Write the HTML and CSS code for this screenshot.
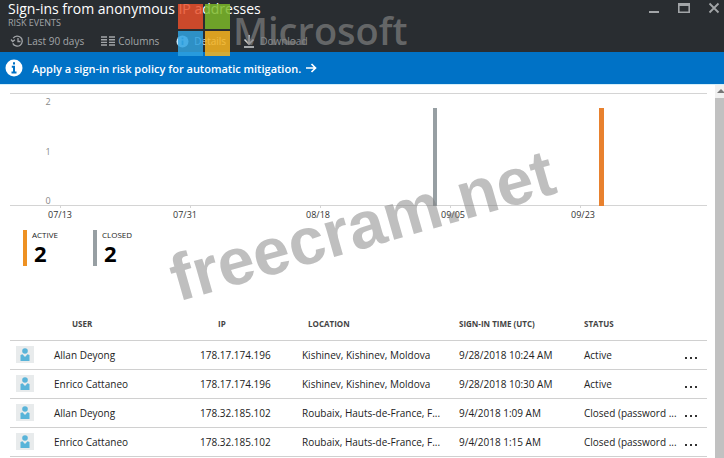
FILE: index.html
```html
<!DOCTYPE html>
<html lang="en">
<head>
  <meta charset="UTF-8">
  <title>Sign-ins from anonymous IP addresses</title>
  <link rel="stylesheet" href="styles.css">
</head>
<body>

<header class="blade-header">
  <div class="title-row">
    <h1>Sign-ins from anonymous IP addresses</h1>
    <div class="window-buttons">
      <button aria-label="Minimize"><svg width="12" height="12" viewBox="0 0 12 12"><path d="M1 10h10" stroke-width="2"/></svg></button>
      <button aria-label="Maximize"><svg width="12" height="12" viewBox="0 0 12 12"><path d="M0 2.500h12M.800 2v8.200h10.400V2" stroke-width="1.600"/><path d="M0 2.500h12" stroke-width="3"/></svg></button>
      <button aria-label="Close"><svg width="12" height="12" viewBox="0 0 12 12"><path d="M1.500 1.500l9 9M10.500 1.500l-9 9" stroke-width="1.800"/></svg></button>
    </div>
  </div>
  <div class="subtitle">RISK EVENTS</div>
  <div class="toolbar">
    <button>
      <svg width="14" height="12" viewBox="0 0 14 12"><path d="M3.200 3.200a5 5 0 1 1-.4 5.200M1 4.500l1.700 2 2.200-1.800M8 3v3.500h2.500" stroke-width="1.300"/></svg>
      Last 90 days
    </button>
    <button>
      <svg width="14" height="10" viewBox="0 0 14 10"><path d="M0 1h6M8 1h6M0 3.700h6M8 3.700h6M0 6.400h6M8 6.400h6M0 9h6M8 9h6" stroke-width="1.400"/></svg>
      Columns
    </button>
    <button class="details">
      <svg width="13" height="13" viewBox="0 0 13 13"><circle class="solid" cx="6.500" cy="6.500" r="6"/><path class="cut" d="M6.500 5.500v4.500M6.500 2.500v1.800" stroke-width="1.800"/></svg>
      Details
    </button>
    <button class="download">
      <svg width="12" height="13" viewBox="0 0 12 13"><path d="M6 0v8.500M1.500 4.500L6 9l4.500-4.500M1 12h10" stroke-width="1.600"/></svg>
      Download
    </button>
  </div>
  <div class="brand">
    <svg width="52" height="52" viewBox="0 0 52 52">
      <path fill="#ea4f2a" d="M0 0h25v25H0z"/>
      <path fill="#7cb928" d="M27 0h25v25H27z"/>
      <path fill="#30a3e2" d="M0 27h25v25H0z"/>
      <path fill="#fbb71f" d="M27 27h25v25H27z"/>
    </svg>
    <span>Microsoft</span>
  </div>
</header>

<a class="banner" href="#">
  <svg width="18" height="18" viewBox="0 0 18 18"><circle cx="9" cy="9" r="8.500" fill="#fff"/><path d="M9 3.200v2.400M6.800 7.700H9v5.500M6.500 13.500h5" stroke="#0072c6" stroke-width="2" fill="none"/></svg>
  <span>Apply a sign-in risk policy for automatic mitigation.</span>
  <svg width="11" height="10" viewBox="0 0 11 10"><path d="M0 5h9.500M5.500 1l4 4-4 4" stroke="#fff" stroke-width="1.700" fill="none"/></svg>
</a>

<div class="content">
  <main>
    <svg class="chart" viewBox="0 0 697 132">
      <path class="grid" d="M0 .5h697M0 112.500h697M50.500 112v3M180.500 112v3M310.500 112v3M440.500 112v3M570.500 112v3"/>
      <g class="y-labels">
        <text x="38" y="12">2</text>
        <text x="38" y="62">1</text>
        <text x="38" y="111">0</text>
      </g>
      <g class="x-labels">
        <text x="50" y="125">07/13</text>
        <text x="175" y="125">07/31</text>
        <text x="308" y="125">08/18</text>
        <text x="443" y="125">09/05</text>
        <text x="573" y="125">09/23</text>
      </g>
      <rect x="423" y="15" width="4" height="98" fill="#979fa3"/>
      <rect x="589" y="15" width="5" height="98" fill="#e8812e"/>
    </svg>

    <div class="legend">
      <div class="legend-item active">
        <span>ACTIVE</span>
        <strong>2</strong>
      </div>
      <div class="legend-item closed">
        <span>CLOSED</span>
        <strong>2</strong>
      </div>
    </div>

    <table>
      <colgroup>
        <col class="c-icon"><col class="c-user"><col class="c-ip"><col class="c-loc"><col class="c-time"><col class="c-status"><col class="c-more">
      </colgroup>
      <thead>
        <tr><th></th><th class="inset">USER</th><th class="inset">IP</th><th class="nudge">LOCATION</th><th>SIGN-IN TIME (UTC)</th><th>STATUS</th><th></th></tr>
      </thead>
      <tbody>
        <tr>
          <td><svg class="user" viewBox="0 0 18 17"><use href="#person"/></svg></td>
          <td>Allan Deyong</td><td>178.17.174.196</td><td>Kishinev, Kishinev, Moldova</td><td>9/28/2018 10:24 AM</td><td>Active</td>
          <td><button class="more" aria-label="More"><i></i><i></i><i></i></button></td>
        </tr>
        <tr>
          <td><svg class="user" viewBox="0 0 18 17"><use href="#person"/></svg></td>
          <td>Enrico Cattaneo</td><td>178.17.174.196</td><td>Kishinev, Kishinev, Moldova</td><td>9/28/2018 10:30 AM</td><td>Active</td>
          <td><button class="more" aria-label="More"><i></i><i></i><i></i></button></td>
        </tr>
        <tr>
          <td><svg class="user" viewBox="0 0 18 17"><use href="#person"/></svg></td>
          <td>Allan Deyong</td><td>178.32.185.102</td><td>Roubaix, Hauts-de-France, F...</td><td>9/4/2018 1:09 AM</td><td>Closed (password ...</td>
          <td><button class="more" aria-label="More"><i></i><i></i><i></i></button></td>
        </tr>
        <tr>
          <td><svg class="user" viewBox="0 0 18 17"><use href="#person"/></svg></td>
          <td>Enrico Cattaneo</td><td>178.32.185.102</td><td>Roubaix, Hauts-de-France, F...</td><td>9/4/2018 1:15 AM</td><td>Closed (password ...</td>
          <td><button class="more" aria-label="More"><i></i><i></i><i></i></button></td>
        </tr>
      </tbody>
    </table>
    <div class="watermark">freecram.net</div>
  </main>
  <div class="scrollbar">
    <svg width="9" height="12" viewBox="0 0 9 12"><path d="M2 8l4-4 4 4z" fill="#777"/></svg>
  </div>
</div>

<svg class="defs">
  <symbol id="person" viewBox="0 0 18 17">
    <circle cx="9" cy="5" r="2.800" fill="#59b4d9"/>
    <path d="M4.500 9l2-.8L9 11l2.500-2.800 2 .8v6h-9z" fill="#59b4d9"/>
  </symbol>
</svg>

</body>
</html>
```

FILE: styles.css
```css
* {
  box-sizing: border-box;
}
body {
  margin: 0;
  min-height: 100vh;
  display: flex;
  flex-direction: column;
  font-family: "Open Sans", "Noto Sans", sans-serif;
  font-size: 10px;
  color: #222;
  background: #fff;
}
button {
  padding: 0;
  border: none;
  background: none;
  font: inherit;
  color: inherit;
  cursor: pointer;
}

/* header */
.blade-header {
  position: relative;
  height: 52px;
  padding: 0 4px 0 8px;
  background: #292d31;
  color: #a2a5a8;
}
.blade-header button svg {
  fill: none;
  stroke: currentColor;
}
.title-row {
  display: flex;
  justify-content: space-between;
}
h1 {
  margin: 0;
  font-size: 14px;
  line-height: 18px;
  font-weight: 400;
  color: #fff;
}
.window-buttons {
  display: flex;
  gap: 18px;
  padding-top: 2px;
}
.window-buttons button {
  height: 12px;
}
.window-buttons svg {
  display: block;
}
.subtitle {
  font-size: 9px;
  line-height: 10px;
}
.toolbar {
  display: flex;
  gap: 17px;
  padding: 5px 0 0 2px;
  font-size: 10px;
  line-height: 16px;
}
.toolbar button {
  display: flex;
  align-items: center;
  gap: 3px;
}
.toolbar .details {
  gap: 5px;
  color: #c4dbe8;
}
.toolbar .solid {
  fill: #c4e4f6;
  stroke: none;
}
.toolbar .cut {
  stroke: #2f8fc4;
}
.toolbar .download {
  gap: 5px;
  color: #8a8e92;
}
.toolbar .download svg {
  color: #d0d2d4;
}
/* the logo is see-through, the header text shows under it */
.brand {
  position: absolute;
  left: 178px;
  top: 4px;
  display: flex;
  gap: 3px;
  font-size: 38px;
  line-height: 52px;
  font-weight: 600;
  color: rgba(128, 128, 128, 0.7);
  pointer-events: none;
}
.brand svg {
  opacity: 0.84;
}

/* banner */
.banner {
  display: flex;
  align-items: center;
  gap: 5px;
  height: 33px;
  padding-left: 5px;
  border-bottom: 1px solid #d5effa;
  background: #0072c6;
  color: #fff;
  font-size: 11px;
  font-weight: 600;
  text-decoration: none;
}
.banner span {
  padding-left: 4px;
}

/* content */
.content {
  flex: 1;
  display: flex;
}
main {
  position: relative;
  flex: 1;
  padding: 8px 8px 0 10px;
}
.chart {
  display: block;
  width: 100%;
}
.grid {
  stroke: #d4d4d4;
}
.y-labels {
  fill: #888;
  font-size: 9px;
  text-anchor: middle;
}
.x-labels {
  fill: #333;
  font-size: 9px;
  text-anchor: middle;
}
.legend {
  display: flex;
  gap: 16px;
  padding: 5px 13px 0;
}
.legend-item {
  width: 54px;
  height: 36px;
  padding-left: 5px;
  border-left: 4px solid #979fa3;
}
.legend-item.active {
  border-color: #ee9122;
}
.legend-item span {
  display: block;
  font-size: 8px;
  line-height: 10px;
}
.legend-item strong {
  display: block;
  padding-left: 2px;
  font-size: 22px;
  line-height: 27px;
  color: #000;
}

/* table */
table {
  width: 100%;
  margin-top: 41px;
  table-layout: fixed;
  border-collapse: collapse;
}
.c-icon { width: 44px; }
.c-user { width: 146px; }
.c-ip { width: 102px; }
.c-loc { width: 157px; }
.c-time { width: 125px; }
.c-more { width: 24px; }
th, td {
  height: 29px;
  padding: 0;
  border-bottom: 1px solid #d0d0d0;
  text-align: left;
  white-space: nowrap;
}
th {
  height: 33px;
  font-size: 8px;
  font-weight: 700;
  color: #444;
}
th.inset {
  padding-left: 18px;
}
th.nudge {
  padding-left: 6px;
}
.user {
  display: block;
  width: 18px;
  height: 17px;
  margin-left: 6px;
  background: #e8ebec;
}
.more {
  display: flex;
  gap: 3px;
  padding: 6px 0 0 2px;
}
.more i {
  width: 2px;
  height: 2px;
  background: #333;
}
.watermark {
  position: absolute;
  left: 164px;
  top: 102px;
  font: bold 66px/76px "Liberation Sans", Arial, sans-serif;
  color: rgba(128, 128, 128, 0.5);
  transform: rotate(-16deg);
  pointer-events: none;
}
.scrollbar {
  width: 9px;
  background: linear-gradient(#f0f0f0 13px, #c1c1c1 13px);
}
.scrollbar svg {
  display: block;
}
.defs {
  display: none;
}
```
